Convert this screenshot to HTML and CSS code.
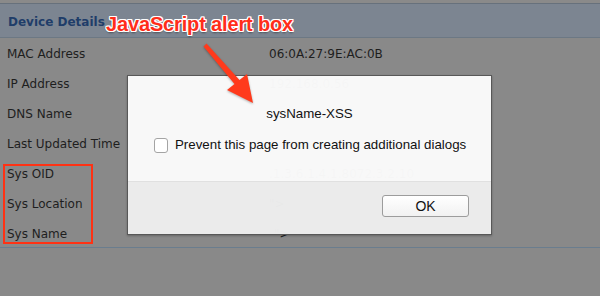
FILE: index.html
```html
<!DOCTYPE html>
<html lang="en">
<head>
  <meta charset="UTF-8">
  <title>Device Details</title>
  <link rel="stylesheet" href="styles.css">
</head>
<body>
  <div class="top-strip"></div>
  <div class="panel-head">
    <h2>Device Details</h2>
  </div>

  <div class="details">
    <div class="row"><span class="label">MAC Address</span><span class="value">06:0A:27:9E:AC:0B</span></div>
    <div class="row"><span class="label">IP Address</span><span class="value">192.168.0.56</span></div>
    <div class="row"><span class="label">DNS Name</span><span class="value"></span></div>
    <div class="row"><span class="label">Last Updated Time</span><span class="value"></span></div>
    <div class="row"><span class="label">Sys OID</span><span class="value">.1.3.6.1.4.1.8072.3.2.10</span></div>
    <div class="row"><span class="label">Sys Location</span><span class="value">"&gt;</span></div>
    <div class="row"><span class="label">Sys Name</span><span class="value shift">"&gt;</span></div>
  </div>

  <div class="dialog">
    <div class="dialog-body">
      <p class="message">sysName-XSS</p>
      <label class="prevent"><span class="check"></span>Prevent this page from creating additional dialogs</label>
    </div>
    <div class="dialog-foot">
      <button class="ok">OK</button>
    </div>
  </div>

  <!-- annotations drawn over the screenshot -->
  <div class="note">JavaScript alert box</div>
  <div class="highlight"></div>
  <svg class="arrow" width="600" height="296" viewBox="0 0 600 296">
    <polygon points="203.5,46.5 206.5,43.5 239.5,80 247,74 253,103 227,90 234.5,84" fill="#ff3a1c"/>
  </svg>
</body>
</html>
```

FILE: styles.css
```css
body {
  margin: 0;
  background: #898989;
  font-family: "DejaVu Sans", Verdana, sans-serif;
  font-size: 12px;
  color: #1e1e1e;
  width: 600px;
  height: 296px;
  overflow: hidden;
  position: relative;
}
.top-strip {
  height: 3px;
  background: #8a8a8a;
}
.panel-head {
  height: 33px;
  background: #7c8591;
  border-top: 1px solid #67717c;
  border-bottom: 1px solid #6c7884;
  display: flex;
  align-items: center;
  padding-left: 8px;
  box-sizing: content-box;
}
.panel-head h2 {
  margin: 0;
  padding-top: 2px;
  font-size: 12px;
  font-weight: bold;
  color: #1f3d69;
}
.details {
  height: 208px;
  padding-top: 1px;
  border-bottom: 1px solid #6a7d8e;
}
.row {
  height: 30px;
  display: grid;
  grid-template-columns: 262px auto;
  align-items: center;
  padding-left: 7px;
}
.value.shift {
  padding-left: 5px;
}
.dialog {
  position: absolute;
  left: 127px;
  top: 75px;
  width: 363px;
  border: 1px solid #585858;
  box-shadow: 0 1px 2px rgba(0,0,0,0.25);
  font-family: "Liberation Sans", Arial, sans-serif;
  font-size: 13.3px;
  color: #111;
}
.dialog-body {
  height: 105px;
  background: rgba(251,251,251,0.975);
  padding-top: 30px;
  box-sizing: border-box;
}
.message {
  margin: 0;
  line-height: 16px;
  text-align: center;
}
.prevent {
  display: flex;
  align-items: center;
  margin-top: 15px;
  padding-left: 26px;
  line-height: 16px;
}
.check {
  width: 12px;
  height: 13px;
  border: 1px solid #a4a4a4;
  border-radius: 3px;
  background: #fff;
  margin-right: 7px;
}
.dialog-foot {
  height: 53px;
  background: rgba(238,238,238,0.975);
  border-top: 1px solid #e0e0e0;
  display: flex;
  justify-content: flex-end;
  align-items: flex-start;
  padding: 13px 22px 0 0;
  box-sizing: border-box;
}
.ok {
  width: 87px;
  height: 22px;
  border: 1px solid #9c9c9c;
  border-radius: 3px;
  background: linear-gradient(#ffffff, #f1f1f1);
  font-family: "Liberation Sans", Arial, sans-serif;
  font-size: 14px;
  color: #111;
  padding: 0;
}
.note {
  position: absolute;
  left: 106px;
  top: 13px;
  font-family: "Liberation Sans", Arial, sans-serif;
  font-size: 20px;
  font-weight: bold;
  letter-spacing: -0.15px;
  color: #ff2d1a;
  text-shadow: 1px 0 0 #fff, -1px 0 0 #fff, 0 1px 0 #fff, 0 -1px 0 #fff,
    1px 1px 0 #fff, -1px -1px 0 #fff, 1px -1px 0 #fff, -1px 1px 0 #fff,
    0 2px 2px rgba(0,0,0,0.4);
}
.highlight {
  position: absolute;
  left: 3px;
  top: 164px;
  width: 86px;
  height: 76px;
  border: 2px solid #ff3214;
}
.arrow {
  position: absolute;
  left: 0;
  top: 0;
  filter: drop-shadow(0 1px 1px rgba(0,0,0,0.3));
}
```
